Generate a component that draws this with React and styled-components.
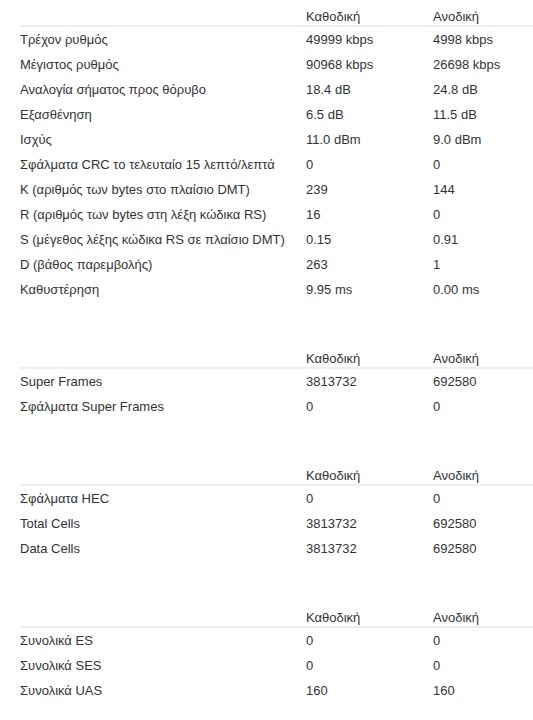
import React from 'react';
import styled, { createGlobalStyle } from 'styled-components';

const GlobalStyle = createGlobalStyle`
  html, body {
    margin: 0;
    padding: 0;
    background: #fff;
  }
  body {
    font-family: "Liberation Sans", Arial, sans-serif;
    font-size: 13px;
    color: #333;
  }
`;

const Page = styled.div`
  padding: 0 0 20px 20px;
  display: flex;
  flex-direction: column;
  gap: 40px;
`;

const Table = styled.div`
  display: grid;
  grid-template-columns: 286px 127px 1fr;
`;

const HeadCell = styled.div`
  font-weight: normal;
  height: 17px;
  line-height: 17px;
  padding-top: 8px;
  border-bottom: 2px solid #eee;
  white-space: nowrap;
`;

const Cell = styled.div`
  height: 25px;
  line-height: 17px;
  padding-top: 4px;
  box-sizing: border-box;
  white-space: nowrap;
`;

const sections = [
  [
    ['Τρέχον ρυθμός', '49999 kbps', '4998 kbps'],
    ['Μέγιστος ρυθμός', '90968 kbps', '26698 kbps'],
    ['Αναλογία σήματος προς θόρυβο', '18.4 dB', '24.8 dB'],
    ['Εξασθένηση', '6.5 dB', '11.5 dB'],
    ['Ισχύς', '11.0 dBm', '9.0 dBm'],
    ['Σφάλματα CRC το τελευταίο 15 λεπτό/λεπτά', '0', '0'],
    ['K (αριθμός των bytes στο πλαίσιο DMT)', '239', '144'],
    ['R (αριθμός των bytes στη λέξη κώδικα RS)', '16', '0'],
    ['S (μέγεθος λέξης κώδικα RS σε πλαίσιο DMT)', '0.15', '0.91'],
    ['D (βάθος παρεμβολής)', '263', '1'],
    ['Καθυστέρηση', '9.95 ms', '0.00 ms'],
  ],
  [
    ['Super Frames', '3813732', '692580'],
    ['Σφάλματα Super Frames', '0', '0'],
  ],
  [
    ['Σφάλματα HEC', '0', '0'],
    ['Total Cells', '3813732', '692580'],
    ['Data Cells', '3813732', '692580'],
  ],
  [
    ['Συνολικά ES', '0', '0'],
    ['Συνολικά SES', '0', '0'],
    ['Συνολικά UAS', '160', '160'],
  ],
];

const StatsTable = ({ rows }) => (
  <Table>
    <HeadCell />
    <HeadCell>Καθοδική</HeadCell>
    <HeadCell>Ανοδική</HeadCell>
    {rows.map(row => row.map((v, i) => <Cell key={row[0] + i}>{v}</Cell>))}
  </Table>
);

const App = () => (
  <>
    <GlobalStyle />
    <Page>
      {sections.map((rows, i) => <StatsTable key={i} rows={rows} />)}
    </Page>
  </>
);

export default App;
